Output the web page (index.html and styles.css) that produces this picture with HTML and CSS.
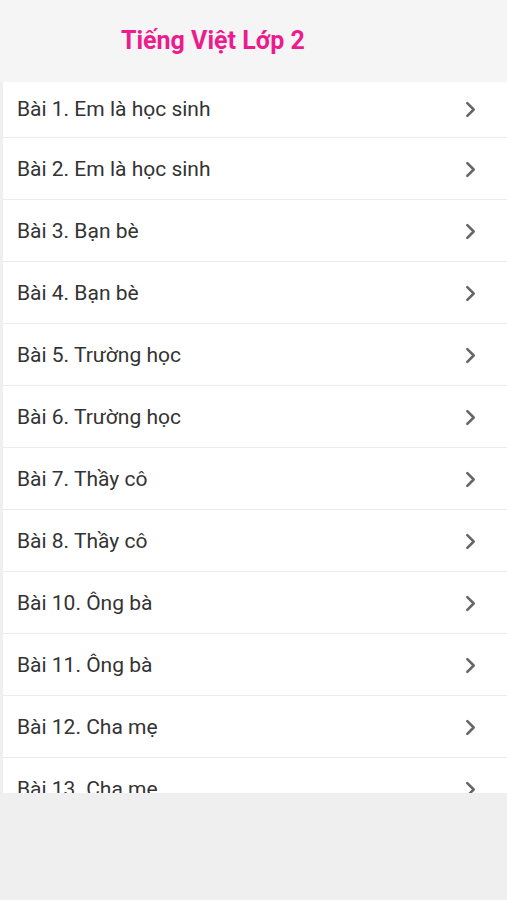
FILE: index.html
```html
<!DOCTYPE html>
<html>
<head>
<meta charset="utf-8">
<meta name="viewport" content="initial-scale=1.0, width=device-width">
<title>Tiếng Việt Lớp 2</title>
<link rel="stylesheet" href="styles.css">
</head>
<body>

<div class="header">
  <h1>Tiếng Việt Lớp 2</h1>
</div>

<ul class="lessons">
  <li class="first"><span>Bài 1. Em là học sinh</span><svg class="chev" viewBox="0 0 10 16"><path d="M2 2 L8 8 L2 14"/></svg></li>
  <li><span>Bài 2. Em là học sinh</span><svg class="chev" viewBox="0 0 10 16"><path d="M2 2 L8 8 L2 14"/></svg></li>
  <li><span>Bài 3. Bạn bè</span><svg class="chev" viewBox="0 0 10 16"><path d="M2 2 L8 8 L2 14"/></svg></li>
  <li><span>Bài 4. Bạn bè</span><svg class="chev" viewBox="0 0 10 16"><path d="M2 2 L8 8 L2 14"/></svg></li>
  <li><span>Bài 5. Trường học</span><svg class="chev" viewBox="0 0 10 16"><path d="M2 2 L8 8 L2 14"/></svg></li>
  <li><span>Bài 6. Trường học</span><svg class="chev" viewBox="0 0 10 16"><path d="M2 2 L8 8 L2 14"/></svg></li>
  <li><span>Bài 7. Thầy cô</span><svg class="chev" viewBox="0 0 10 16"><path d="M2 2 L8 8 L2 14"/></svg></li>
  <li><span>Bài 8. Thầy cô</span><svg class="chev" viewBox="0 0 10 16"><path d="M2 2 L8 8 L2 14"/></svg></li>
  <li><span>Bài 10. Ông bà</span><svg class="chev" viewBox="0 0 10 16"><path d="M2 2 L8 8 L2 14"/></svg></li>
  <li><span>Bài 11. Ông bà</span><svg class="chev" viewBox="0 0 10 16"><path d="M2 2 L8 8 L2 14"/></svg></li>
  <li><span>Bài 12. Cha mẹ</span><svg class="chev" viewBox="0 0 10 16"><path d="M2 2 L8 8 L2 14"/></svg></li>
  <li class="cut"><span>Bài 13. Cha mẹ</span><svg class="chev" viewBox="0 0 10 16"><path d="M2 2 L8 8 L2 14"/></svg></li>
</ul>

</body>
</html>
```

FILE: styles.css
```css
html,body,ul,li,h1{margin:0;padding:0;}
*{box-sizing:border-box;}
body{
  font-family:Roboto,"Noto Sans",sans-serif;
  background:#efefef;
  width:507px;
  height:900px;
  overflow:hidden;
}
.header{
  height:82px;
  background:#f5f5f5;
  display:flex;
  align-items:center;
  padding-left:121px;
}
.header h1{
  font-size:25px;
  font-weight:bold;
  color:#ec1b8e;
  margin-top:-1px;
}
.lessons{
  list-style:none;
  margin-left:3px;
  background:#fff;
  height:711px;
  overflow:hidden;
}
.lessons li{
  height:62px;
  display:flex;
  align-items:center;
  justify-content:space-between;
  padding:0 31px 0 14px;
  border-bottom:1px solid #ececec;
  font-size:21px;
  color:#333;
}
.lessons li.first{
  height:56px;
  padding-bottom:2px;
}
.chev{
  width:11px;
  height:17px;
  margin-top:2px;
  fill:none;
  stroke:#666;
  stroke-width:2.4;
  stroke-linecap:round;
  stroke-linejoin:round;
}
```
